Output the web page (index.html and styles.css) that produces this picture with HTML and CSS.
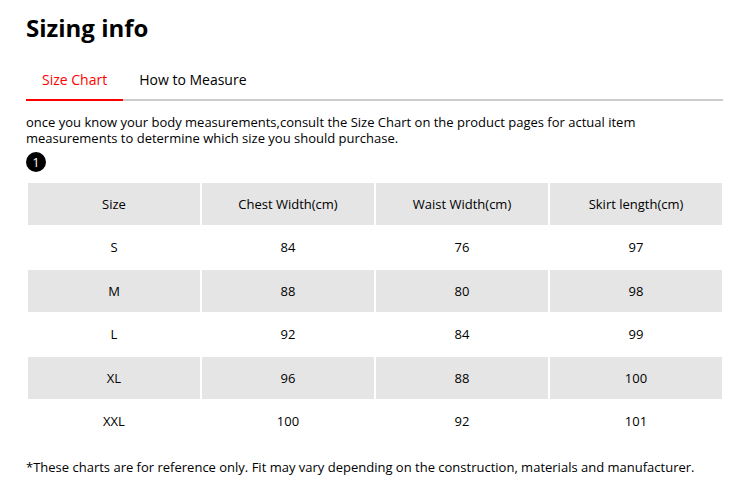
FILE: index.html
```html
<!DOCTYPE html>
<html>
<head>
<meta charset="utf-8">
<link rel="stylesheet" href="styles.css">
</head>
<body>
<div class="page">
  <h1 class="title">Sizing info</h1>
  <div class="tabs">
    <div class="tab active">Size Chart</div>
    <div class="tab">How to Measure</div>
  </div>
  <p class="intro">once you know your body measurements,consult the Size Chart on the product pages for actual item measurements to determine which size you should purchase.</p>
  <span class="badge">1</span>
  <table class="chart">
    <tr class="shade"><td>Size</td><td>Chest Width(cm)</td><td>Waist Width(cm)</td><td>Skirt length(cm)</td></tr>
    <tr><td>S</td><td>84</td><td>76</td><td>97</td></tr>
    <tr class="shade"><td>M</td><td>88</td><td>80</td><td>98</td></tr>
    <tr><td>L</td><td>92</td><td>84</td><td>99</td></tr>
    <tr class="shade"><td>XL</td><td>96</td><td>88</td><td>100</td></tr>
    <tr><td>XXL</td><td>100</td><td>92</td><td>101</td></tr>
  </table>
  <p class="note">*These charts are for reference only. Fit may vary depending on the construction, materials and manufacturer.</p>
</div>
</body>
</html>
```

FILE: styles.css
```css
html, body {
  margin: 0;
  padding: 0;
  background: #ffffff;
}
body {
  font-family: "Open Sans", "Liberation Sans", sans-serif;
  color: #000000;
}
.page {
  width: 698px;
  padding: 12px 0 0 26px;
}
.title {
  margin: 0;
  font-size: 24px;
  line-height: 32px;
  font-weight: 700;
}
.tabs {
  display: flex;
  margin-top: 16px;
  width: 697px;
  border-bottom: 2px solid #cccccc;
}
.tab {
  padding: 10px 16px 9px;
  font-size: 14px;
  line-height: 20px;
  margin-bottom: -2px;
  border-bottom: 2px solid transparent;
}
.tab.active {
  color: #ff0000;
  border-bottom-color: #ff0000;
}
.intro {
  margin: 13px 0 0;
  width: 640px;
  font-size: 13px;
  line-height: 16px;
}
.badge {
  display: flex;
  align-items: center;
  justify-content: center;
  width: 20px;
  height: 20px;
  margin-top: 6px;
  border-radius: 50%;
  background: #000000;
  color: #ffffff;
  font-size: 13px;
  line-height: 1;
}
.chart {
  margin-top: 9px;
  width: 698px;
  border-spacing: 2px;
  table-layout: fixed;
}
.chart td {
  height: 41.5px;
  padding: 0;
  text-align: center;
  font-size: 13px;
}
.chart .shade td {
  background: #e5e5e5;
}
.note {
  margin: 13px 0 0;
  font-size: 13px;
  line-height: 20px;
}
```
